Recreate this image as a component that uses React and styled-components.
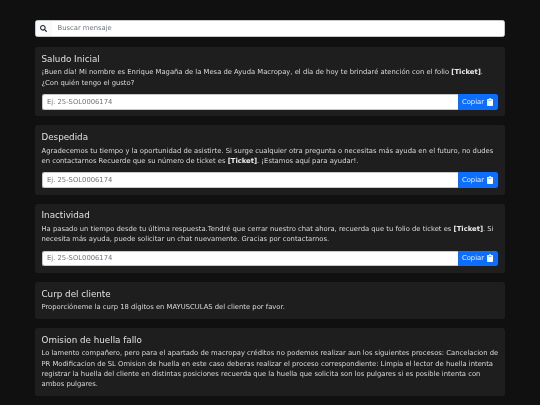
import styled, { createGlobalStyle } from 'styled-components'
import { FaSearch, FaClipboard } from 'react-icons/fa'

const GlobalStyle = createGlobalStyle`
  html, body {
    margin: 0;
    height: 100%;
    overflow: hidden;
    background: #101010;
    font-family: "DejaVu Sans", sans-serif;
  }
`

const messages = [
  {
    title: 'Saludo Inicial',
    input: true,
    body: (
      <>
        ¡Buen día! Mi nombre es Enrique Magaña de la Mesa de Ayuda Macropay, el día de hoy te brindaré atención con el folio <b>[Ticket]</b>. ¿Con quién tengo el gusto?
      </>
    ),
  },
  {
    title: 'Despedida',
    input: true,
    body: (
      <>
        Agradecemos tu tiempo y la oportunidad de asistirte. Si surge cualquier otra pregunta o necesitas más ayuda en el futuro, no dudes en contactarnos Recuerde que su número de ticket es <b>[Ticket]</b>. ¡Estamos aquí para ayudar!.
      </>
    ),
  },
  {
    title: 'Inactividad',
    input: true,
    body: (
      <>
        Ha pasado un tiempo desde tu última respuesta.Tendré que cerrar nuestro chat ahora, recuerda que tu folio de ticket es <b>[Ticket]</b>. Si necesita más ayuda, puede solicitar un chat nuevamente. Gracias por contactarnos.
      </>
    ),
  },
  {
    title: 'Curp del cliente',
    body: <>Proporcióneme la curp 18 dígitos en MAYUSCULAS del cliente por favor.</>,
  },
  {
    title: 'Omision de huella fallo',
    body: (
      <>
        Lo lamento compañero, pero para el apartado de macropay créditos no podemos realizar aun los siguientes procesos: Cancelacion de PR Modificacion de SL Omision de huella en este caso deberas realizar el proceso correspondiente: Limpia el lector de huella intenta registrar la huella del cliente en distintas posiciones recuerda que la huella que solicita son los pulgares si es posible intenta con ambos pulgares.
      </>
    ),
  },
]

export default function App() {
  return (
    <>
      <GlobalStyle />
      <Page>
        <SearchBar>
          <SearchIcon>
            <FaSearch />
          </SearchIcon>
          <SearchInput placeholder="Buscar mensaje" />
        </SearchBar>
        {messages.map((m) => (
          <Card key={m.title}>
            <Title>{m.title}</Title>
            <Body>{m.body}</Body>
            {m.input && (
              <InputRow>
                <TicketInput placeholder="Ej. 25-SOL0006174" />
                <CopyButton>
                  Copiar <FaClipboard />
                </CopyButton>
              </InputRow>
            )}
          </Card>
        ))}
        <Card />
      </Page>
    </>
  )
}

const Page = styled.div`
  box-sizing: border-box;
  width: 540px;
  height: 405px;
  overflow: hidden;
  padding: 20px 35px 0 34.5px;
  display: flex;
  flex-direction: column;
  gap: 9px;
  will-change: transform;
`

const SearchBar = styled.div`
  box-sizing: border-box;
  display: flex;
  flex: none;
  height: 16.5px;
  margin-bottom: 1.5px;
  background: #fff;
  border: 1px solid #c8c8c8;
  border-radius: 2.5px;
  overflow: hidden;
`

const SearchIcon = styled.span`
  width: 16px;
  background: #f8f9fa;
  display: flex;
  align-items: center;
  justify-content: center;
  font-size: 7px;
  color: #212529;
`

const SearchInput = styled.input`
  flex: 1;
  border: 0;
  outline: 0;
  padding: 0 0 0 6px;
  background: #fff;
  font: 6.8px "DejaVu Sans", sans-serif;
  &::placeholder {
    color: #6c757d;
  }
`

const Card = styled.section`
  flex: none;
  min-height: 20px;
  background: #1e1e1e;
  border-radius: 2.5px;
  padding: 6.8px 7px 6.7px 7px;
`

const Title = styled.h3`
  margin: 0 0 2.5px 0;
  font-size: 8.75px;
  line-height: 11px;
  font-weight: 400;
  color: #e0e0e0;
`

const Body = styled.p`
  margin: 0 -2px 0 0;
  font-size: 6.8px;
  line-height: 10.2px;
  color: #dadada;
  b {
    color: #ececec;
  }
`

const InputRow = styled.div`
  display: flex;
  height: 15.6px;
  margin-top: 6.3px;
`

const TicketInput = styled.input`
  box-sizing: border-box;
  flex: 1;
  min-width: 0;
  border: 1px solid #c8c8c8;
  border-right: 0;
  outline: 0;
  padding: 0 0 0 4.5px;
  background: #fff;
  border-radius: 2.5px 0 0 2.5px;
  font: 6.8px "DejaVu Sans", sans-serif;
  &::placeholder {
    color: #6c757d;
  }
`

const CopyButton = styled.button`
  width: 40px;
  border: 0;
  padding: 0;
  background: #0d6efd;
  color: #e8f0ff;
  border-radius: 0 2.5px 2.5px 0;
  font: 6.8px "DejaVu Sans", sans-serif;
  display: flex;
  align-items: center;
  justify-content: center;
  gap: 2px;
  svg {
    font-size: 8px;
    color: #fff;
  }
`
